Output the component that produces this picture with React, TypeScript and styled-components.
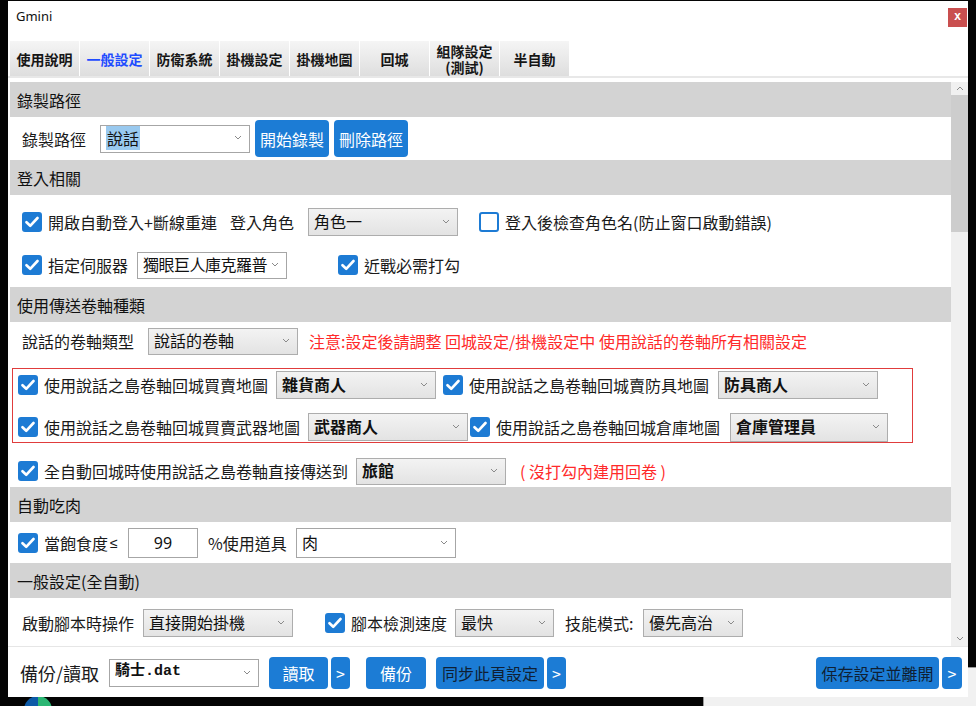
import React from 'react'
import styled, {createGlobalStyle} from 'styled-components'

const GlobalStyle = createGlobalStyle`
  html, body {
    margin: 0;
    padding: 0;
    background: #000;
  }
  body {
    font-family: "Noto Sans CJK TC", "Noto Sans", sans-serif;
    color: #1a1a1a;
  }
  * {
    box-sizing: border-box;
  }
`

const Desktop = styled.div`
  position: relative;
  width: 976px;
  height: 706px;
  overflow: hidden;
  background: #040404;
`
const BackWindow = styled.div`
  position: absolute;
  left: 703px;
  top: 667px;
  right: 0;
  bottom: 0;
  background: #f1f1f1;
  border-top: 1px solid #9a9a9a;
  border-left: 1px solid #9a9a9a;
`
const DockIcon = styled.div`
  position: absolute;
  left: 24px;
  top: 696px;
  width: 28px;
  height: 28px;
  border-radius: 50%;
  background: conic-gradient(#2bb673 0 30%, #1e88e5 30% 75%, #0d5aa7 75%);
`
const Window = styled.div`
  position: absolute;
  left: 8px;
  top: 1px;
  width: 960px;
  height: 696px;
  background: #fff;
  display: flex;
  flex-direction: column;
`
const TitleBar = styled.div`
  height: 40px;
  flex: none;
  display: flex;
  justify-content: space-between;
  align-items: flex-start;
  padding: 6px 1px 0 8px;
`
const Title = styled.span`
  font: 13px/18px "Noto Sans", sans-serif;
  color: #111;
`
const CloseBtn = styled.div`
  margin-top: 1px;
  width: 19px;
  height: 19px;
  background: #c94f4f;
  color: #fff;
  font: bold 12px/17px "Liberation Sans", sans-serif;
  text-align: center;
`
const TabStrip = styled.div`
  height: 35px;
  flex: none;
  display: flex;
  gap: 1px;
  padding-left: 2px;
`
const Tab = styled.div<{$active?: boolean}>`
  width: 69px;
  display: flex;
  flex-direction: column;
  align-items: center;
  justify-content: center;
  text-align: center;
  background: linear-gradient(#f5f5f5, #dedede);
  font-size: 14px;
  font-weight: 700;
  color: ${p => p.$active ? '#1f4cff' : '#161616'};
`
const TabLine = styled.span`
  display: block;
  height: 16px;
  line-height: 16px;
`
const TabRule = styled.div`
  height: 2px;
  flex: none;
  margin-bottom: 4px;
  background: #e8e8e8;
`
const Main = styled.div`
  height: 564px;
  flex: none;
  display: flex;
  padding-left: 2px;
`
const ScrollArea = styled.div`
  width: 941px;
  overflow: hidden;
`
const ScrollBar = styled.div`
  width: 17px;
  background: #f0f0f0;
  display: flex;
  flex-direction: column;
`
const ScrollArrow = styled.div<{$h: number}>`
  height: ${p => p.$h}px;
  display: flex;
  align-items: center;
  justify-content: center;
`
const Thumb = styled.div`
  height: 137px;
  background: #cdcdcd;
`
const SectionHead = styled.div`
  height: 35px;
  background: #d3d3d3;
  padding-left: 7px;
  display: flex;
  align-items: center;
  font-size: 16px;
  color: #111;
`
const SectionBody = styled.div<{$pb?: number}>`
  padding-bottom: ${p => p.$pb ?? 0}px;
`
const Row = styled.div<{$h: number; $mt?: number; $pl?: number}>`
  display: flex;
  align-items: center;
  height: ${p => p.$h}px;
  margin-top: ${p => p.$mt ?? 0}px;
  padding-left: ${p => p.$pl ?? 12}px;
`
const Field = styled.label<{$w?: number; $ml?: number; $size?: number}>`
  display: flex;
  align-items: center;
  gap: 6px;
  flex: none;
  width: ${p => p.$w ? `${p.$w}px` : 'auto'};
  margin-left: ${p => p.$ml ?? 0}px;
  font-size: ${p => p.$size ?? 16}px;
  line-height: 20px;
  white-space: nowrap;
  color: #1a1a1a;
`
const Small = styled.span`
  font: 14px/20px "Liberation Sans", sans-serif;
  margin-left: -4px;
`
const Note = styled.span<{$ml: number}>`
  margin-left: ${p => p.$ml}px;
  font-size: 16px;
  line-height: 20px;
  color: #ff2a2a;
  white-space: nowrap;
`
const RedBox = styled.div`
  margin: 12px 0 0 2px;
  width: 901px;
  border: 1px solid #e03c3c;
  padding: 1px 0 0 5px;
`
const Tick = styled.span<{$on?: boolean}>`
  width: 20px;
  height: 20px;
  flex: none;
  border-radius: 3px;
  display: inline-flex;
  align-items: center;
  justify-content: center;
  border: 2px solid #1d7bd4;
  background: ${p => p.$on ? '#1d7bd4' : '#fff'};
`
const Dropdown = styled.div<{$w: number; $h: number; $grey?: boolean}>`
  width: ${p => p.$w}px;
  height: ${p => p.$h}px;
  flex: none;
  display: flex;
  align-items: center;
  gap: 3px;
  padding: 0 7px 2px 5px;
  border: 1px solid ${p => p.$grey ? '#adadad' : '#a6a6a6'};
  background: ${p => p.$grey ? 'linear-gradient(#f3f3f3, #e3e3e3)' : '#fff'};

  svg {
    flex: none;
    margin-left: auto;
  }
`
const Value = styled.span<{$bold?: boolean; $mono?: boolean; $tight?: boolean}>`
  font-size: ${p => p.$mono ? 15 : 16}px;
  line-height: 20px;
  letter-spacing: ${p => p.$tight ? '-0.5px' : 'normal'};
  font-weight: ${p => p.$bold ? 700 : 400};
  font-family: ${p => p.$mono
    ? '"Liberation Mono", "Noto Sans CJK TC", monospace'
    : '"Noto Sans CJK TC", "Noto Sans", sans-serif'};
  color: #111;
  white-space: nowrap;
`
const Picked = styled.span`
  background: #99c9ef;
  padding: 0 1px;
`
const NumberBox = styled.div`
  width: 70px;
  height: 30px;
  flex: none;
  border: 1px solid #a6a6a6;
  display: flex;
  align-items: center;
  justify-content: center;
  font: 16px/20px "Noto Sans", sans-serif;
  color: #111;
`
const Button = styled.div<{$w: number; $h: number; $ml?: number; $dark?: boolean}>`
  width: ${p => p.$w}px;
  height: ${p => p.$h}px;
  margin-left: ${p => p.$ml ?? 0}px;
  flex: none;
  display: flex;
  align-items: center;
  justify-content: center;
  border-radius: 4px;
  background: #1c7cd5;
  color: ${p => p.$dark ? '#0f1f33' : '#fff'};
  font-size: 16px;
  line-height: 20px;
  white-space: nowrap;
`
const BottomBar = styled.div`
  height: 51px;
  flex: none;
  border-top: 1px solid #e6e6e6;
  display: flex;
  align-items: center;
  padding: 2px 6px 0 12px;
`
const Spacer = styled.div`
  flex: 1;
`

const Chevron = ({up}: {up?: boolean}) => (
    <svg width="8" height="5" viewBox="0 0 8 5">
        <polyline points={up ? '1,4 4,1 7,4' : '1,1 4,4 7,1'} fill="none" stroke="#8a8a8a" strokeWidth="1"/>
    </svg>
)

const Check = ({on}: {on?: boolean}) => (
    <Tick $on={on}>
        {on && <svg width="14" height="12" viewBox="0 0 14 12">
            <polyline points="1.5,6.2 5.2,9.8 12.5,2" fill="none" stroke="#fff" strokeWidth="2.6"
                      strokeLinecap="round" strokeLinejoin="round"/>
        </svg>}
    </Tick>
)

type SelectProps = {
    w: number
    h: number
    grey?: boolean
    bold?: boolean
    mono?: boolean
    tight?: boolean
    children: React.ReactNode
}
const Select = ({w, h, grey, bold, mono, tight, children}: SelectProps) => (
    <Dropdown $w={w} $h={h} $grey={grey}>
        <Value $bold={bold} $mono={mono} $tight={tight}>{children}</Value>
        <Chevron/>
    </Dropdown>
)

const tabs = [['使用說明'], ['一般設定'], ['防衛系統'], ['掛機設定'], ['掛機地圖'], ['回城'], ['組隊設定', '(測試)'], ['半自動']]

function App() {
    return (
        <Desktop>
            <GlobalStyle/>
            <BackWindow/>
            <DockIcon/>
            <Window>
                <TitleBar>
                    <Title>Gmini</Title>
                    <CloseBtn>x</CloseBtn>
                </TitleBar>
                <TabStrip>
                    {tabs.map(lines => (
                        <Tab key={lines[0]} $active={lines[0] === '一般設定'}>
                            {lines.map(line => <TabLine key={line}>{line}</TabLine>)}
                        </Tab>
                    ))}
                </TabStrip>
                <TabRule/>
                <Main>
                    <ScrollArea>
                        <SectionHead>錄製路徑</SectionHead>
                        <Row $h={43}>
                            <Field $w={78}>錄製路徑</Field>
                            <Dropdown $w={150} $h={28}>
                                <Value><Picked>說話</Picked></Value>
                                <Chevron/>
                            </Dropdown>
                            <Button $w={74} $h={37} $ml={5}>開始錄製</Button>
                            <Button $w={74} $h={37} $ml={5}>刪除路徑</Button>
                        </Row>

                        <SectionHead>登入相關</SectionHead>
                        <SectionBody $pb={5}>
                            <Row $h={34} $mt={10}>
                                <Field $w={208}><Check on/>開啟自動登入+斷線重連</Field>
                                <Field $w={78}>登入角色</Field>
                                <Select w={150} h={28} grey>角色一</Select>
                                <Field $ml={21}><Check/>登入後檢查角色名(防止窗口啟動錯誤)</Field>
                            </Row>
                            <Row $h={34} $mt={9}>
                                <Field $w={115}><Check on/>指定伺服器</Field>
                                <Select w={150} h={27} tight>獨眼巨人庫克羅普</Select>
                                <Field $ml={51}><Check on/>近戰必需打勾</Field>
                            </Row>
                        </SectionBody>

                        <SectionHead>使用傳送卷軸種類</SectionHead>
                        <SectionBody $pb={1}>
                            <Row $h={30} $mt={4}>
                                <Field $w={126}>說話的卷軸類型</Field>
                                <Select w={150} h={27} grey>說話的卷軸</Select>
                                <Note $ml={11}>注意:設定後請調整 回城設定/掛機設定中 使用說話的卷軸所有相關設定</Note>
                            </Row>
                            <RedBox>
                                <Row $h={30} $pl={0}>
                                    <Field $w={258}><Check on/>使用說話之島卷軸回城買賣地圖</Field>
                                    <Select w={160} h={28} grey bold>雜貨商人</Select>
                                    <Field $w={275} $ml={7}><Check on/>使用說話之島卷軸回城賣防具地圖</Field>
                                    <Select w={160} h={28} grey bold>防具商人</Select>
                                </Row>
                                <Row $h={30} $mt={12} $pl={0}>
                                    <Field $w={290}><Check on/>使用說話之島卷軸回城買賣武器地圖</Field>
                                    <Select w={160} h={28} grey bold>武器商人</Select>
                                    <Field $w={260} $ml={2}><Check on/>使用說話之島卷軸回城倉庫地圖</Field>
                                    <Select w={158} h={29} grey bold>倉庫管理員</Select>
                                </Row>
                            </RedBox>
                            <Row $h={30} $mt={13} $pl={8}>
                                <Field $w={338}><Check on/>全自動回城時使用說話之島卷軸直接傳送到</Field>
                                <Select w={150} h={27} grey bold>旅館</Select>
                                <Note $ml={14}>( 沒打勾內建用回卷 )</Note>
                            </Row>
                        </SectionBody>

                        <SectionHead>自動吃肉</SectionHead>
                        <SectionBody $pb={4}>
                            <Row $h={32} $mt={5} $pl={8}>
                                <Field $w={110}><Check on/>當飽食度<Small>≤</Small></Field>
                                <NumberBox>99</NumberBox>
                                <Field $w={88} $ml={10}>%使用道具</Field>
                                <Select w={160} h={30}>肉</Select>
                            </Row>
                        </SectionBody>

                        <SectionHead>一般設定(全自動)</SectionHead>
                        <SectionBody>
                            <Row $h={32} $mt={9}>
                                <Field $w={121}>啟動腳本時操作</Field>
                                <Select w={150} h={28} grey>直接開始掛機</Select>
                                <Field $w={130} $ml={32}><Check on/>腳本檢測速度</Field>
                                <Select w={99} h={28} grey>最快</Select>
                                <Field $w={78} $ml={11}>技能模式:</Field>
                                <Select w={100} h={28} grey>優先高治</Select>
                            </Row>
                        </SectionBody>
                    </ScrollArea>
                    <ScrollBar>
                        <ScrollArrow $h={13}><Chevron up/></ScrollArrow>
                        <Thumb/>
                        <Spacer/>
                        <ScrollArrow $h={16}><Chevron/></ScrollArrow>
                    </ScrollBar>
                </Main>
                <BottomBar>
                    <Field $w={89} $size={18}>備份/讀取</Field>
                    <Select w={150} h={28} bold mono>騎士.dat</Select>
                    <Button $w={59} $h={32} $ml={10}>讀取</Button>
                    <Button $w={19} $h={32} $ml={3}>&gt;</Button>
                    <Button $w={60} $h={32} $ml={16}>備份</Button>
                    <Button $w={108} $h={32} $ml={10} $dark>同步此頁設定</Button>
                    <Button $w={19} $h={32} $ml={3}>&gt;</Button>
                    <Spacer/>
                    <Button $w={123} $h={32} $dark>保存設定並離開</Button>
                    <Button $w={20} $h={32} $ml={3}>&gt;</Button>
                </BottomBar>
            </Window>
        </Desktop>
    )
}

export default App
